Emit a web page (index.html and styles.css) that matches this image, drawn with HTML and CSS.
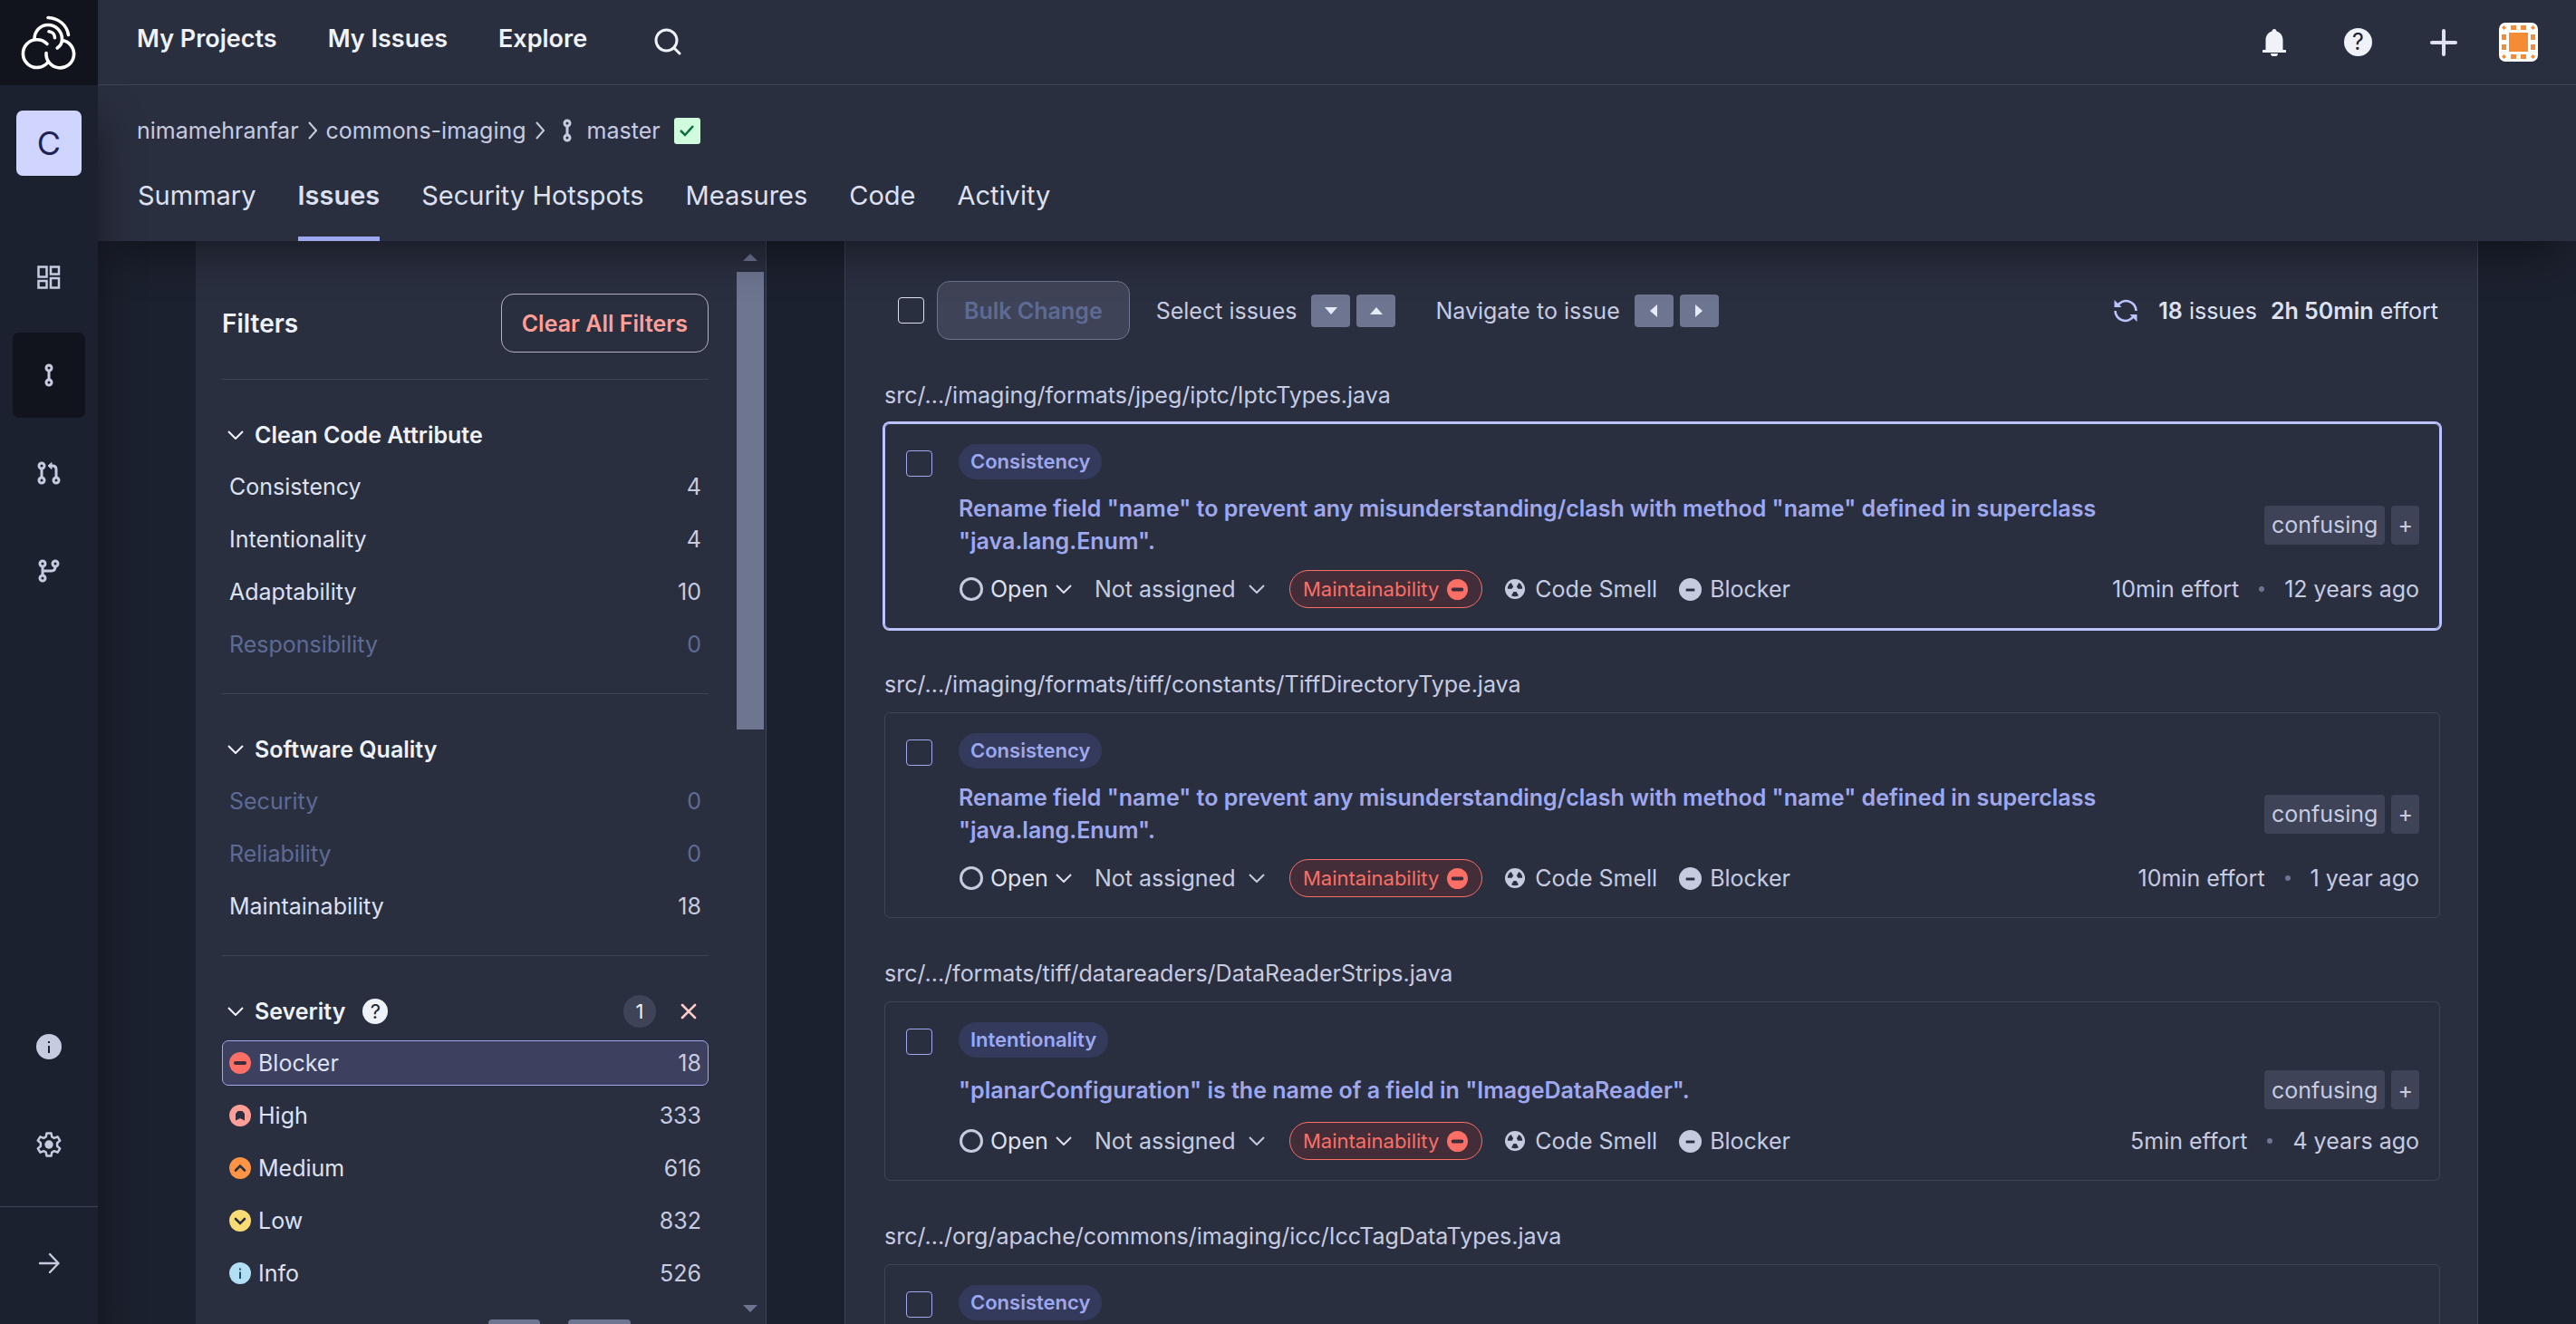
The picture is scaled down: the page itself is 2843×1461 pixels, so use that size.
FILE: index.html
```html
<!DOCTYPE html>
<html lang="en">
<head>
<meta charset="utf-8">
<meta name="viewport" content="width=device-width, initial-scale=1">
<title>Issues - commons-imaging</title>
<link rel="stylesheet" href="styles.css">
</head>
<body>
<svg class="defs" aria-hidden="true">
  <symbol id="chev-down" viewBox="0 0 18 10"><path d="M1 1l8 8 8-8" fill="none" stroke="currentColor" stroke-width="2"/></symbol>
  <symbol id="chev-right" viewBox="0 0 10 20"><path d="M1 1l8 9-8 9" fill="none" stroke="currentColor" stroke-width="2"/></symbol>
  <symbol id="commit" viewBox="0 0 10 26"><g fill="none" stroke="currentColor" stroke-width="3"><circle cx="5" cy="5" r="3"/><circle cx="5" cy="21" r="3"/><path d="M5 8v10"/></g></symbol>
  <symbol id="minus-circle" viewBox="0 0 24 24"><circle cx="12" cy="12" r="12" fill="currentColor"/><rect x="5" y="10" width="14" height="4" rx="2" fill="#3d2c3a"/></symbol>
  <symbol id="blocker" viewBox="0 0 26 26"><circle cx="13" cy="13" r="13" fill="currentColor"/><rect x="8" y="12" width="10" height="3" fill="#2a2f40"/></symbol>
  <symbol id="smell" viewBox="0 0 22 22"><circle cx="11" cy="11" r="11" fill="currentColor"/><g fill="#2a2f40"><path d="M9.500 14h3l2.500 4.200a8 8 0 0 1-8 0z"/><path d="M9.500 14h3l2.500 4.200a8 8 0 0 1-8 0z" transform="rotate(120 11 11)"/><path d="M9.500 14h3l2.500 4.200a8 8 0 0 1-8 0z" transform="rotate(240 11 11)"/></g></symbol>
</svg>

<header class="topbar">
  <a class="logo" href="#" aria-label="Home">
    <svg width="66" height="66" viewBox="20 14 66 66" fill="none" stroke="#fff" stroke-width="3.600" stroke-linecap="round"><path d="M52 19.500C64 20 73 28 74.500 38.500"/><path d="M53 34.700c4 .5 6.500 3.300 6.500 7"/><path d="M37 43c0-8.500 6.500-15.500 15-15.500S67.500 34.500 67.500 43c0 4-1.500 7.500-5.300 10"/><path d="M51 48.500A15.400 15.400 0 1 0 52 68.500"/><path d="M68 44.500A15.300 15.300 0 1 1 50 58.500"/></svg>
  </a>
  <nav class="topnav" aria-label="Main">
    <a href="#">My Projects</a>
    <a href="#">My Issues</a>
    <a href="#">Explore</a>
    <button class="plain search" aria-label="Search"><svg width="30" height="30" viewBox="0 0 30 30" fill="none" stroke="currentColor" stroke-width="3" stroke-linecap="round"><circle cx="13.500" cy="13.500" r="11.500"/><path d="M22 22l6 6"/></svg></button>
  </nav>
  <div class="tools">
    <button class="plain" aria-label="Notifications"><svg width="26" height="30" viewBox="0 0 26 30" fill="currentColor"><path d="M13 0c1.500 0 2.500 1 2.500 2.400C19.500 3.500 22.500 7 22.500 12v11H25a1.500 1.500 0 0 1 0 3H1a1.500 1.500 0 0 1 0-3h2.500V12c0-5 3-8.500 7-9.600C10.500 1 11.500 0 13 0zM9 27h8a4 3.500 0 0 1-8 0z"/></svg></button>
    <button class="help help-lg" aria-label="Help">?</button>
    <button class="plain" aria-label="Create"><svg width="30" height="30" viewBox="0 0 30 30" stroke="#dfe1f1" stroke-width="4" stroke-linecap="round"><path d="M15 2v26M2 15h26"/></svg></button>
    <button class="plain" aria-label="Account"><svg width="43" height="43" viewBox="0 0 43 43"><rect width="43" height="43" rx="7" fill="#fff"/><g fill="#f48c36"><path d="M11 11h21v21H11zM13 3h6v5h-6zM24 3h6v5h-6zM13 35h6v5h-6zM24 35h6v5h-6zM3 13h5v6H3zM3 24h5v6H3zM35 13h5v6h-5zM35 24h5v6h-5z"/><path d="M5.500 3L8 5.500 5.500 8 3 5.500zM37.500 3L40 5.500 37.500 8 35 5.500zM5.500 35L8 37.500 5.500 40 3 37.500zM37.500 35l2.500 2.500-2.500 2.500-2.500-2.500z"/></g></svg></button>
  </div>
</header>

<div class="shell">
  <aside class="rail">
    <a class="project" href="#">C</a>
    <nav class="rail-nav" aria-label="Project">
      <a class="rail-item" href="#" aria-label="Overview"><svg width="26" height="26" viewBox="0 0 26 26" fill="none" stroke="currentColor" stroke-width="2.500"><path d="M1.500 1.500h9v11h-9zM15 1.500h9v8h-9zM1.500 17h9v7.500h-9zM15 14h9v10.500h-9z"/></svg></a>
      <a class="rail-item active" href="#" aria-label="Main branch"><svg width="10" height="26"><use href="#commit"/></svg></a>
      <a class="rail-item" href="#" aria-label="Pull requests"><svg width="26" height="26" viewBox="0 0 26 26" fill="none" stroke="currentColor" stroke-width="3"><circle cx="5" cy="5" r="3"/><circle cx="5" cy="21" r="3"/><circle cx="21" cy="21" r="3"/><path d="M5 8v10M21 18V9q0-4-4-4h-3"/><path d="M16 1.500V8.500L12 5z" fill="currentColor" stroke-width="1"/></svg></a>
      <a class="rail-item" href="#" aria-label="Branches"><svg width="24" height="26" viewBox="0 0 24 26" fill="none" stroke="currentColor" stroke-width="3"><circle cx="5" cy="5" r="3"/><circle cx="5" cy="21" r="3"/><circle cx="19" cy="5" r="3"/><path d="M5 8v10M5 13h10q4 0 4-5"/></svg></a>
    </nav>
    <nav class="rail-nav rail-low" aria-label="Settings">
      <a class="rail-item" href="#" aria-label="Information"><svg width="28" height="28" viewBox="0 0 28 28"><circle cx="14" cy="14" r="14" fill="currentColor"/><path d="M13 8h2v2h-2zM13 13h2v8h-2z" fill="#1c212f"/></svg></a>
      <a class="rail-item" href="#" aria-label="Administration"><svg width="28" height="28" viewBox="0 0 28 28" fill="none" stroke="currentColor" stroke-width="2.500" stroke-linejoin="round"><path d="M11.500 1.500h5l.8 4 2.500 1.300 3.800-1.500 2.600 4.300-3.100 2.700v3.400l3.100 2.700-2.600 4.300-3.800-1.500-2.500 1.300-.8 4h-5l-.8-4-2.500-1.300-3.800 1.500-2.600-4.300 3.100-2.700v-3.400L1.800 9.600l2.600-4.300 3.800 1.500 2.500-1.300z"/><circle cx="14" cy="14" r="4.700" fill="currentColor" stroke="none"/></svg></a>
    </nav>
    <button class="plain rail-expand" aria-label="Expand sidebar"><svg width="24" height="24" viewBox="0 0 24 24" fill="none" stroke="currentColor" stroke-width="2.400" stroke-linecap="round" stroke-linejoin="round"><path d="M2 12h20M13 2l9.500 10L13 22"/></svg></button>
  </aside>

  <div class="content">
    <div class="project-head">
      <nav class="crumbs" aria-label="Breadcrumb">
        <a href="#">nimamehranfar</a>
        <svg width="10" height="20"><use href="#chev-right"/></svg>
        <a href="#">commons-imaging</a>
        <svg width="10" height="20"><use href="#chev-right"/></svg>
        <a class="branch" href="#"><svg width="10" height="26"><use href="#commit"/></svg>master</a>
        <span class="gate"><svg width="16" height="14" viewBox="0 0 16 14" fill="none" stroke="#0a6e3f" stroke-width="2.500"><path d="M1 7l5 5 9-10"/></svg></span>
      </nav>
      <nav class="tabs" aria-label="Sections">
        <a href="#">Summary</a>
        <a class="current" href="#" aria-current="page">Issues</a>
        <a href="#">Security Hotspots</a>
        <a href="#">Measures</a>
        <a href="#">Code</a>
        <a href="#">Activity</a>
      </nav>
    </div>

    <div class="workspace">
      <aside class="filters">
        <div class="filters-body">
          <div class="filters-head">
            <h2>Filters</h2>
            <button class="clear">Clear All Filters</button>
          </div>
          <section class="facet">
            <h3 class="facet-head"><svg width="18" height="10"><use href="#chev-down"/></svg>Clean Code Attribute</h3>
            <button class="row"><span>Consistency</span><span class="n">4</span></button>
            <button class="row"><span>Intentionality</span><span class="n">4</span></button>
            <button class="row"><span>Adaptability</span><span class="n">10</span></button>
            <button class="row" disabled><span>Responsibility</span><span class="n">0</span></button>
          </section>
          <section class="facet">
            <h3 class="facet-head"><svg width="18" height="10"><use href="#chev-down"/></svg>Software Quality</h3>
            <button class="row" disabled><span>Security</span><span class="n">0</span></button>
            <button class="row" disabled><span>Reliability</span><span class="n">0</span></button>
            <button class="row"><span>Maintainability</span><span class="n">18</span></button>
          </section>
          <section class="facet">
            <div class="facet-head">
              <svg width="18" height="10"><use href="#chev-down"/></svg>
              <h3>Severity</h3>
              <button class="help" aria-label="About severity">?</button>
              <span class="count">1</span>
              <button class="plain reset" aria-label="Clear severity"><svg width="18" height="18" viewBox="0 0 18 18" stroke="#ffccc7" stroke-width="2.600" stroke-linecap="round"><path d="M2 2l14 14M16 2L2 16"/></svg></button>
            </div>
            <button class="row selected"><svg class="blocker-red" width="24" height="24"><use href="#minus-circle"/></svg><span>Blocker</span><span class="n">18</span></button>
            <button class="row"><svg width="24" height="24" viewBox="0 0 24 24"><circle cx="12" cy="12" r="12" fill="#ff9f97"/><path d="M7 17.500V10l2.500-3h5L17 10v7.500L12 15z" fill="#2a2f40"/></svg><span>High</span><span class="n">333</span></button>
            <button class="row"><svg width="24" height="24" viewBox="0 0 24 24"><circle cx="12" cy="12" r="12" fill="#ff9444"/><path d="M7 14.500l5-5 5 5" fill="none" stroke="#2a2f40" stroke-width="2.600" stroke-linecap="round"/></svg><span>Medium</span><span class="n">616</span></button>
            <button class="row"><svg width="24" height="24" viewBox="0 0 24 24"><circle cx="12" cy="12" r="12" fill="#fbdc74"/><path d="M7 10l5 5 5-5" fill="none" stroke="#2a2f40" stroke-width="2.600" stroke-linecap="round"/></svg><span>Low</span><span class="n">832</span></button>
            <button class="row"><svg width="24" height="24" viewBox="0 0 24 24"><circle cx="12" cy="12" r="12" fill="#b3dff5"/><path d="M11 6.500h2v2h-2zM11 10.500h2V18h-2z" fill="#1d4a6b"/></svg><span>Info</span><span class="n">526</span></button>
            <div class="hint"><span class="hint-key"></span><span class="hint-key wide"></span></div>
          </section>
        </div>
        <div class="scroll" aria-hidden="true"><i class="tri up"></i><i class="thumb"></i><i class="tri down"></i></div>
      </aside>

      <main class="issues">
        <div class="toolbar">
          <input type="checkbox" aria-label="Select all issues">
          <button class="bulk" disabled>Bulk Change</button>
          <div class="keys">Select issues
            <kbd aria-label="down"><svg width="14" height="8" viewBox="0 0 14 8"><path d="M0 0h14L7 8z" fill="#e6e9f8"/></svg></kbd>
            <kbd aria-label="up"><svg width="14" height="8" viewBox="0 0 14 8"><path d="M0 8h14L7 0z" fill="#e6e9f8"/></svg></kbd>
          </div>
          <div class="keys">Navigate to issue
            <kbd aria-label="left"><svg width="8" height="14" viewBox="0 0 8 14"><path d="M8 0v14L0 7z" fill="#e6e9f8"/></svg></kbd>
            <kbd aria-label="right"><svg width="8" height="14" viewBox="0 0 8 14"><path d="M0 0v14l8-7z" fill="#e6e9f8"/></svg></kbd>
          </div>
          <div class="totals">
            <button class="plain refresh" aria-label="Reload"><svg width="26" height="26" viewBox="0 0 26 26" fill="none" stroke="currentColor" stroke-width="2.600"><path d="M4 7.500A11 11 0 0 1 24.500 13M22 18.500A11 11 0 0 1 1.500 13"/><path d="M.5 1v8H8.500zM25.500 25v-8h-8z" fill="currentColor" stroke="none"/></svg></button>
            <span><b>18</b> issues</span>
            <span><b>2h 50min</b> effort</span>
          </div>
        </div>

        <h4 class="path">src/.../imaging/formats/jpeg/iptc/IptcTypes.java</h4>
        <article class="card focused">
          <input type="checkbox" aria-label="Select issue">
          <div class="card-body">
            <span class="pill">Consistency</span>
            <div class="title-row">
              <a class="title" href="#">Rename field "name" to prevent any misunderstanding/clash with method "name" defined in superclass "java.lang.Enum".</a>
              <div class="tags"><button class="tag">confusing</button><button class="tag add">+</button></div>
            </div>
            <div class="meta">
              <span class="pick status"><i class="ring"></i><select aria-label="Status"><option>Open</option></select><svg width="18" height="10"><use href="#chev-down"/></svg></span>
              <span class="pick assignee"><select aria-label="Assignee"><option>Not assigned</option></select><svg width="18" height="10"><use href="#chev-down"/></svg></span>
              <span class="quality">Maintainability<svg width="23" height="23"><use href="#minus-circle"/></svg></span>
              <span class="kind"><svg width="22" height="22"><use href="#smell"/></svg>Code Smell</span>
              <span class="kind sev"><svg width="25" height="25"><use href="#blocker"/></svg>Blocker</span>
              <span class="age"><span>10min effort</span><i class="dot"></i><span>12 years ago</span></span>
            </div>
          </div>
        </article>

        <h4 class="path">src/.../imaging/formats/tiff/constants/TiffDirectoryType.java</h4>
        <article class="card">
          <input type="checkbox" aria-label="Select issue">
          <div class="card-body">
            <span class="pill">Consistency</span>
            <div class="title-row">
              <a class="title" href="#">Rename field "name" to prevent any misunderstanding/clash with method "name" defined in superclass "java.lang.Enum".</a>
              <div class="tags"><button class="tag">confusing</button><button class="tag add">+</button></div>
            </div>
            <div class="meta">
              <span class="pick status"><i class="ring"></i><select aria-label="Status"><option>Open</option></select><svg width="18" height="10"><use href="#chev-down"/></svg></span>
              <span class="pick assignee"><select aria-label="Assignee"><option>Not assigned</option></select><svg width="18" height="10"><use href="#chev-down"/></svg></span>
              <span class="quality">Maintainability<svg width="23" height="23"><use href="#minus-circle"/></svg></span>
              <span class="kind"><svg width="22" height="22"><use href="#smell"/></svg>Code Smell</span>
              <span class="kind sev"><svg width="25" height="25"><use href="#blocker"/></svg>Blocker</span>
              <span class="age"><span>10min effort</span><i class="dot"></i><span>1 year ago</span></span>
            </div>
          </div>
        </article>

        <h4 class="path">src/.../formats/tiff/datareaders/DataReaderStrips.java</h4>
        <article class="card">
          <input type="checkbox" aria-label="Select issue">
          <div class="card-body">
            <span class="pill">Intentionality</span>
            <div class="title-row">
              <a class="title" href="#">"planarConfiguration" is the name of a field in "ImageDataReader".</a>
              <div class="tags"><button class="tag">confusing</button><button class="tag add">+</button></div>
            </div>
            <div class="meta">
              <span class="pick status"><i class="ring"></i><select aria-label="Status"><option>Open</option></select><svg width="18" height="10"><use href="#chev-down"/></svg></span>
              <span class="pick assignee"><select aria-label="Assignee"><option>Not assigned</option></select><svg width="18" height="10"><use href="#chev-down"/></svg></span>
              <span class="quality">Maintainability<svg width="23" height="23"><use href="#minus-circle"/></svg></span>
              <span class="kind"><svg width="22" height="22"><use href="#smell"/></svg>Code Smell</span>
              <span class="kind sev"><svg width="25" height="25"><use href="#blocker"/></svg>Blocker</span>
              <span class="age"><span>5min effort</span><i class="dot"></i><span>4 years ago</span></span>
            </div>
          </div>
        </article>

        <h4 class="path">src/.../org/apache/commons/imaging/icc/IccTagDataTypes.java</h4>
        <article class="card">
          <input type="checkbox" aria-label="Select issue">
          <div class="card-body">
            <span class="pill">Consistency</span>
            <div class="title-row"></div>
          </div>
        </article>
      </main>
    </div>
  </div>
</div>
</body>
</html>
```
FILE: styles.css
```css
:root {
  --page: #1c212f;
  --panel: #2a2f40;
  --line: #3f4357;
  --key: #6e7591;
  --text: #eff2f9;
  --soft: #dde1f0;
  --muted: #c6cbe0;
  --off: #5d6b94;
  --accent: #9ea8ef;
  --red: #fb6f66;
}

* { box-sizing: border-box; }

body {
  margin: 0;
  height: 100vh;
  display: flex;
  flex-direction: column;
  overflow: hidden;
  background: var(--page);
  color: var(--muted);
  font: 400 25px/36px Inter, "Liberation Sans", sans-serif;
}

.defs { position: absolute; width: 0; height: 0; }
svg { display: block; flex: none; }
a { color: inherit; text-decoration: none; }
button, select { font: inherit; color: inherit; }
h2, h3, h4 { margin: 0; font: inherit; }
.plain { border: 0; padding: 0; background: none; }

input[type="checkbox"] {
  appearance: none;
  flex: none;
  width: 29px;
  height: 29px;
  margin: 0;
  border: 1px solid var(--soft);
  border-radius: 4px;
}

/* Top bar */
.topbar {
  position: relative;
  z-index: 4;
  display: flex;
  flex: none;
  height: 94px;
  background: var(--panel);
}
.logo {
  display: flex;
  align-items: center;
  justify-content: center;
  width: 108px;
  background: #11141d;
}
.topnav, .tools { display: flex; border-bottom: 1px solid var(--line); color: var(--text); }
.topnav {
  flex: 1;
  gap: 56px;
  padding: 25px 0 0 43px;
  font-size: 27px;
  font-weight: 600;
}
.search { height: 42px; margin-left: 18px; }
.tools {
  align-items: center;
  gap: 64px;
  padding-right: 42px;
}
.tools > :last-child { margin-left: -18px; }
.help {
  width: 28px;
  height: 28px;
  padding: 0;
  border: 0;
  border-radius: 50%;
  background: var(--text);
  color: #1f2433;
  font-size: 22px;
  line-height: 28px;
}
.help-lg { width: 31px; height: 31px; font-size: 25px; line-height: 31px; }

/* Left rail */
.shell { flex: 1; display: flex; min-height: 0; }
.rail {
  position: relative;
  z-index: 3;
  display: flex;
  flex: none;
  flex-direction: column;
  align-items: center;
  width: 108px;
  padding-top: 28px;
  background: var(--page);
  box-shadow: 0 36px 50px 0 rgba(0, 0, 0, .45);
}
.project {
  width: 72px;
  height: 72px;
  border-radius: 7px;
  background: #cfd5ff;
  color: #1e2352;
  font-size: 36px;
  line-height: 72px;
  text-align: center;
}
.rail-nav { display: grid; gap: 14px; margin-top: 65px; }
.rail-low { margin: auto 0 21px; }
.rail-item {
  display: flex;
  align-items: center;
  justify-content: center;
  width: 80px;
  height: 94px;
  border-radius: 7px;
}
.rail-item.active { background: #11141d; }
.rail-expand {
  display: flex;
  align-items: center;
  justify-content: center;
  width: 100%;
  height: 130px;
  padding-bottom: 6px;
  border-top: 1px solid var(--line);
}

/* Project header */
.content { flex: 1; display: flex; flex-direction: column; min-width: 0; }
.project-head {
  position: relative;
  z-index: 2;
  flex: none;
  padding: 31px 43px 0;
  background: var(--panel);
  box-shadow: 0 30px 50px -18px rgba(0, 0, 0, .45);
}
.crumbs { display: flex; align-items: center; gap: 10px; height: 38px; }
.branch { display: flex; align-items: center; gap: 17px; margin-left: 10px; }
.gate {
  display: flex;
  align-items: center;
  justify-content: center;
  width: 29px;
  height: 29px;
  margin-left: 5px;
  border-radius: 3px;
  background: #d0fbdd;
}
.tabs {
  display: flex;
  gap: 46px;
  height: 103px;
  padding-left: 1px;
  color: var(--soft);
  font-size: 29px;
  line-height: 106px;
}
.current { border-bottom: 5px solid var(--accent); font-weight: 600; }

/* Workspace */
.workspace {
  flex: 1;
  display: flex;
  gap: 86px;
  min-height: 0;
  padding: 0 108px;
}
.filters {
  flex: none;
  display: flex;
  width: 630px;
  min-height: 0;
  border-right: 1px solid var(--line);
  background: var(--panel);
}
.filters-body { flex: 1; padding: 58px 31px 0 29px; overflow: hidden; }
.filters-head {
  display: flex;
  align-items: center;
  justify-content: space-between;
  padding-bottom: 29px;
}
.filters-head h2 { color: var(--text); font-size: 28px; font-weight: 600; }
.clear, .bulk {
  height: 65px;
  padding: 0 22px;
  border: 1px solid #b5afc5;
  border-radius: 14px;
  background: none;
  color: #ff9f97;
  font-weight: 600;
}
.facet {
  display: flex;
  flex-direction: column;
  gap: 8px;
  padding: 36px 0 29px;
  border-top: 1px solid var(--line);
}
.facet-head {
  display: flex;
  align-items: center;
  gap: 12px;
  height: 49px;
  padding: 0 13px 0 6px;
  color: var(--text);
  font-weight: 600;
}
.facet-head .help { margin-left: 7px; font-weight: 400; }
.count {
  width: 36px;
  height: 36px;
  margin-left: auto;
  border-radius: 50%;
  background: var(--line);
  font-size: 22px;
  font-weight: 400;
  text-align: center;
}
.reset { margin-left: 15px; }
.row {
  display: flex;
  align-items: center;
  gap: 8px;
  height: 50px;
  padding: 0 7px;
  border: 1px solid transparent;
  border-radius: 7px;
  background: none;
  color: var(--soft);
}
.row .n { margin-left: auto; color: var(--muted); }
.row:disabled, .row:disabled .n { color: var(--off); }
.row.selected { border-color: var(--accent); background: #3d405f; }
.blocker-red { color: var(--red); }
.hint { display: flex; justify-content: flex-end; gap: 31px; padding: 18px 86px 0 0; }
.hint-key { width: 57px; height: 36px; border-radius: 4px; background: var(--key); }
.hint-key.wide { width: 69px; }
.scroll {
  display: flex;
  flex-direction: column;
  align-items: center;
  width: 32px;
  padding: 14px 2px 13px 0;
}
.thumb { width: 30px; height: 505px; margin-top: 12px; background: var(--key); }
.tri { border: 8px solid transparent; }
.tri.up { border-top: 0; border-bottom-color: var(--key); }
.tri.down { margin-top: auto; border-bottom: 0; border-top-color: var(--key); }

/* Issue list */
.issues {
  flex: 1;
  min-width: 0;
  padding: 44px 41px 0 43px;
  overflow: hidden;
  border: solid var(--line);
  border-width: 0 1px;
  background: var(--panel);
}
.toolbar { display: flex; align-items: center; height: 65px; padding: 0 2px 0 15px; }
.bulk {
  margin: 0 29px 0 14px;
  padding: 0 29px;
  border-color: var(--key);
  background: var(--line);
  color: var(--off);
}
.keys { display: flex; align-items: center; gap: 7px; margin-right: 44px; }
kbd {
  display: flex;
  align-items: center;
  justify-content: center;
  width: 43px;
  height: 36px;
  border-radius: 4px;
  background: var(--key);
}
kbd:first-of-type { margin-left: 9px; }
.totals { display: flex; align-items: center; gap: 15px; margin-left: auto; color: var(--soft); }
.totals b { font-weight: 600; }
.refresh { margin-right: 8px; color: #bcc4ff; }

.path { margin: 43px 0 13px; }
.card {
  display: flex;
  gap: 29px;
  padding: 22px;
  border: 1px solid var(--line);
  border-radius: 6px;
}
.card.focused { border-color: #bcc4ff; box-shadow: 0 0 0 2px #bcc4ff; }
.card > input[type="checkbox"] { margin: 7px 0 0 1px; border-color: var(--accent); }
.card-body {
  flex: 1;
  display: flex;
  flex-direction: column;
  align-items: stretch;
  gap: 14px;
  min-width: 0;
}
.pill {
  align-self: flex-start;
  height: 39px;
  padding: 0 13px;
  border-radius: 20px;
  background: #343a5c;
  color: var(--accent);
  font-size: 22px;
  font-weight: 600;
  line-height: 39px;
}
.title-row { display: flex; align-items: center; gap: 43px; min-height: 43px; }
.title { flex: 1; color: var(--accent); font-weight: 600; }
.tags { display: flex; gap: 7px; }
.tag {
  height: 43px;
  padding: 0 8px;
  border: 0;
  border-radius: 4px;
  background: var(--line);
}
.tag.add { padding: 0 7px; }
.meta { display: flex; align-items: center; height: 42px; }
.pick { display: flex; align-items: center; }
.pick select { appearance: none; padding: 0; border: 0; background: none; }
.status { gap: 8px; margin: 0 25px 0 1px; color: var(--soft); }
.assignee { gap: 14px; margin-right: 27px; }
.ring { width: 26px; height: 26px; border: 3px solid var(--muted); border-radius: 50%; }
.quality {
  display: flex;
  align-items: center;
  gap: 9px;
  height: 42px;
  padding: 0 15px 0 14px;
  border: 1px solid var(--red);
  border-radius: 21px;
  background: #422d38;
  color: var(--red);
  font-size: 22px;
}
.kind { display: flex; align-items: center; gap: 11px; margin-left: 25px; }
.kind.sev { margin-left: 24px; gap: 9px; }
.age { display: flex; align-items: center; gap: 22px; margin-left: auto; }
.dot { width: 6px; height: 6px; border-radius: 50%; background: var(--key); }
```
